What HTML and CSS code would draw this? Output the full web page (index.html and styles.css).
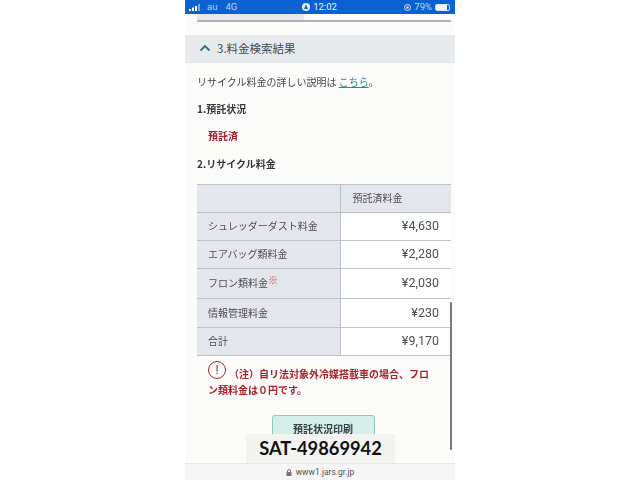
FILE: index.html
```html
<!DOCTYPE html>
<html lang="ja">
<head>
<meta charset="utf-8">
<title>料金検索結果</title>
<link rel="stylesheet" href="styles.css">
</head>
<body>
<main class="phone">
  <div class="status">
    <div class="status-left">
      <svg class="signal" width="12" height="7" viewBox="0 0 12 7"><rect x="0" y="5" width="2" height="2"/><rect x="3" y="3.500" width="2" height="3.500"/><rect x="6" y="2" width="2" height="5"/><rect x="9" y="0" width="2" height="7" opacity=".45"/></svg>
      <span>au</span><span>4G</span>
    </div>
    <div class="status-mid">
      <svg width="8" height="8" viewBox="0 0 8 8"><circle cx="4" cy="4" r="4" fill="#e8f0fa"/><path d="M4 1.600 6 6H2z" fill="#0a62cf"/></svg>
      <span>12:02</span>
    </div>
    <div class="status-right">
      <svg width="7" height="7" viewBox="0 0 7 7"><circle cx="3.500" cy="3.500" r="3" fill="none" stroke="#cfe0f5"/><circle cx="3.500" cy="3.500" r="1.300" fill="#cfe0f5"/></svg>
      <span>79%</span>
      <span class="battery"><span class="battery-fill"></span></span>
    </div>
  </div>
  <div class="progress"><div class="progress-done"></div></div>
  <h2 class="section-head">
    <svg width="12" height="8" viewBox="0 0 12 8"><path d="M1.500 6.500 6 2l4.500 4.500" fill="none" stroke="#2f6f73" stroke-width="1.800"/></svg>
    <span>3.料金検索結果</span>
  </h2>
  <div class="content">
    <p class="intro">リサイクル料金の詳しい説明は <a href="#">こちら</a>。</p>
    <h3 class="sub first">1.預託状況</h3>
    <p class="status-value">預託済</p>
    <h3 class="sub second">2.リサイクル料金</h3>
    <table class="fees">
      <tr class="r-head"><th></th><td class="col-head">預託済料金</td></tr>
      <tr class="r-28"><th>シュレッダーダスト料金</th><td>¥4,630</td></tr>
      <tr class="r-28"><th>エアバッグ類料金</th><td>¥2,280</td></tr>
      <tr class="r-30"><th>フロン類料金<sup>※</sup></th><td>¥2,030</td></tr>
      <tr class="r-29"><th>情報管理料金</th><td>¥230</td></tr>
      <tr class="r-28"><th>合計</th><td>¥9,170</td></tr>
    </table>
    <div class="note"><span class="note-icon">!</span>（注）自リ法対象外冷媒搭載車の場合、フロン類料金は０円です。</div>
    <div class="actions"><button class="print">預託状況印刷</button></div>
  </div>
  <div class="scrollbar"></div>
  <div class="watermark">SAT-49869942</div>
  <div class="url">
    <svg width="6" height="7" viewBox="0 0 6 7"><rect x=".5" y="3" width="5" height="4" fill="#777"/><path d="M1.500 3V2a1.500 1.500 0 0 1 3 0v1" fill="none" stroke="#777"/></svg>
    <span>www1.jars.gr.jp</span>
  </div>
</main>
</body>
</html>
```
FILE: styles.css
```css
* { box-sizing: border-box; }
html, body { margin: 0; height: 480px; overflow: hidden; background: #fff; }
body { display: flex; justify-content: center; font-family: "Noto Sans CJK JP", "Noto Sans", sans-serif; }
.phone {
  position: relative;
  width: 270px;
  height: 480px;
  overflow: hidden;
  background: #fbfbf9;
  display: flex;
  flex-direction: column;
  color: #3a3f45;
}
.status {
  height: 14px;
  flex: none;
  background: #0a62d2;
  color: #b9d2f1;
  font: 9.500px/14px "Roboto", sans-serif;
  display: grid;
  grid-template-columns: 1fr auto 1fr;
  align-items: center;
  padding: 0 5px 0 4px;
}
.status-left { display: flex; align-items: center; gap: 6px; }
.status-left span + span { margin-left: 2px; }
.signal { fill: #fff; }
.status-mid { display: flex; align-items: center; gap: 3px; color: #eef4fc; }
.status-right { display: flex; align-items: center; justify-content: flex-end; gap: 3px; }
.battery { width: 15px; height: 7px; border: 1px solid #cfe0f5; border-radius: 2px; display: block; }
.battery-fill { display: block; width: 11px; height: 100%; background: #f2f6fc; }
.progress { height: 8px; margin: 0 4px 13px 12px; border-bottom: 2px solid #aeb0b1; flex: none; }
.progress-done { width: 107px; height: 6px; background: #e6e9ec; }
.section-head {
  margin: 0;
  height: 28px;
  flex: none;
  background: #e7eaed;
  display: flex;
  align-items: center;
  gap: 6px;
  padding: 0 0 2px 14px;
  font-size: 11.500px;
  font-weight: 400;
  color: #454a50;
}
.content { padding: 0 4px 0 12px; flex: none; filter: blur(.3px); }
.intro { margin: 11px 0 0; font-size: 10px; line-height: 16px; color: #43484e; }
.intro a { color: #2a8a94; }
.sub { margin: 0; font-size: 10px; line-height: 16px; font-weight: 700; color: #33383d; }
.first { margin-top: 11px; }
.status-value { margin: 11px 0 0 11px; font-size: 10px; line-height: 16px; font-weight: 700; color: #a81c2a; }
.second { margin-top: 12px; }
.fees { width: 254px; margin-top: 12px; border-collapse: collapse; table-layout: fixed; font-size: 10px; }
.fees th, .fees td { padding: 0 12px 2px; border: 1px solid #bcc1c6; border-left: 0; border-right: 0; color: #4b5056; }
.fees th { width: 143px; font-weight: 400; text-align: left; background: #e3e6ea; padding-left: 11px; border-right: 1px solid #bcc1c6; }
.fees td { text-align: right; background: #fff; font-family: "Roboto", "Noto Sans CJK JP", sans-serif; font-size: 12.500px; }
.fees td.col-head { text-align: left; background: #e3e6ea; font-family: "Noto Sans CJK JP", sans-serif; font-size: 10px; }
.fees sup { color: #d8404a; font-size: 10px; line-height: 0; vertical-align: 3px; }
.r-head { height: 28px; }
.r-28 { height: 28px; }
.r-29 { height: 29px; }
.r-30 { height: 30px; }
.note {
  margin: 5px 0 0;
  padding-left: 11px;
  font-size: 10px;
  line-height: 16px;
  font-weight: 700;
  color: #a8242c;
  width: 240px;
}
.note-icon {
  display: inline-flex;
  align-items: center;
  justify-content: center;
  width: 18px;
  height: 18px;
  margin-right: 3px;
  border: 1.500px solid #a8242c;
  border-radius: 50%;
  font: 400 12px/1 "Roboto", sans-serif;
  vertical-align: 4px;
}
.actions { display: flex; justify-content: center; margin: 17px 0 0 -12px; padding-left: 10px; }
.print {
  width: 103px;
  height: 40px;
  padding: 0 0 13px;
  background: #d3efe8;
  border: 1px solid #8fc9c0;
  border-radius: 3px;
  font: 700 10px "Noto Sans CJK JP", sans-serif;
  color: #3a3f45;
}
.scrollbar { position: absolute; right: 3px; top: 302px; width: 2px; height: 148px; background: #77797b; border-radius: 1px; }
.watermark {
  position: absolute;
  left: 61px;
  top: 434px;
  width: 149px;
  height: 29px;
  background: #f2f3f1;
  color: #111;
  font: 700 18.300px/29px "Lato", sans-serif;
  text-align: center;
}
.url {
  position: absolute;
  left: 0;
  right: 0;
  bottom: 0;
  height: 17px;
  background: #f5f5f5;
  border-top: 1px solid #e8e8e8;
  display: flex;
  align-items: center;
  justify-content: center;
  gap: 4px;
  font: 8.500px "Roboto", sans-serif;
  color: #555;
}
```
